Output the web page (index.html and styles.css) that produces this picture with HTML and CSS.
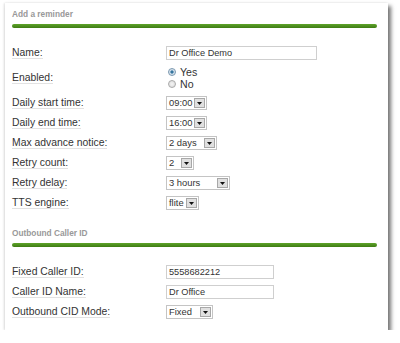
FILE: index.html
```html
<!DOCTYPE html>
<html>
<head>
  <meta charset="utf-8">
  <title>Add a reminder</title>
  <link rel="stylesheet" href="styles.css">
</head>
<body>
  <div class="card">
    <div class="section-head">
      <h2>Add a reminder</h2>
      <div class="bar"></div>
    </div>

    <div class="form">
      <label class="label">Name:</label>
      <input class="text wide" type="text" value="Dr Office Demo">

      <label class="label">Enabled:</label>
      <div class="radios">
        <label class="radio"><input type="radio" name="enabled" checked> Yes</label>
        <label class="radio"><input type="radio" name="enabled"> No</label>
      </div>

      <label class="label">Daily start time:</label>
      <div class="select w41"><span class="val">09:00</span><span class="btn"><svg width="5" height="3" viewBox="0 0 5 3"><path d="M0 0h5L2.5 3z"/></svg></span></div>

      <label class="label">Daily end time:</label>
      <div class="select w41"><span class="val">16:00</span><span class="btn"><svg width="5" height="3" viewBox="0 0 5 3"><path d="M0 0h5L2.5 3z"/></svg></span></div>

      <label class="label">Max advance notice:</label>
      <div class="select w51"><span class="val">2 days</span><span class="btn"><svg width="5" height="3" viewBox="0 0 5 3"><path d="M0 0h5L2.5 3z"/></svg></span></div>

      <label class="label">Retry count:</label>
      <div class="select w28"><span class="val">2</span><span class="btn"><svg width="5" height="3" viewBox="0 0 5 3"><path d="M0 0h5L2.5 3z"/></svg></span></div>

      <label class="label">Retry delay:</label>
      <div class="select w64"><span class="val">3 hours</span><span class="btn"><svg width="5" height="3" viewBox="0 0 5 3"><path d="M0 0h5L2.5 3z"/></svg></span></div>

      <label class="label">TTS engine:</label>
      <div class="select w33"><span class="val">flite</span><span class="btn"><svg width="5" height="3" viewBox="0 0 5 3"><path d="M0 0h5L2.5 3z"/></svg></span></div>
    </div>

    <div class="section-head second">
      <h2>Outbound Caller ID</h2>
      <div class="bar"></div>
    </div>

    <div class="form tight">
      <label class="label">Fixed Caller ID:</label>
      <input class="text medium" type="text" value="5558682212">

      <label class="label">Caller ID Name:</label>
      <input class="text medium" type="text" value="Dr Office">

      <label class="label">Outbound CID Mode:</label>
      <div class="select w47"><span class="val">Fixed</span><span class="btn"><svg width="5" height="3" viewBox="0 0 5 3"><path d="M0 0h5L2.5 3z"/></svg></span></div>
    </div>
  </div>
</body>
</html>
```

FILE: styles.css
```css
* {
  margin: 0;
  padding: 0;
  box-sizing: border-box;
}

body {
  background: #fff;
  font-family: 'Liberation Sans', Arial, sans-serif;
  color: #333;
}

.card {
  margin: 3px 0 0 5px;
  width: 383px;
  height: 327px;
  background: #fff;
  padding: 0 11px 0 7px;
  box-shadow: 3px 3px 4px rgba(0, 0, 0, 0.55), -1px 0 2px rgba(0, 0, 0, 0.12);
}

.section-head {
  padding-top: 6px;
}

.section-head.second {
  padding-top: 18px;
}

h2 {
  font-size: 8.3px;
  font-weight: bold;
  color: #999;
  line-height: 10px;
}

.bar {
  margin-top: 5px;
  height: 4px;
  border-radius: 2px;
  background: linear-gradient(#5ea42a, #3f7c14);
}

.form {
  display: grid;
  grid-template-columns: 154px auto;
  row-gap: 6px;
  align-items: center;
  justify-items: start;
  margin-top: 18px;
}

.form.tight {
  margin-top: 18px;
}

.label {
  font-size: 10.4px;
  line-height: 11px;
  color: #333;
  border-bottom: 1px solid #e2e2e2;
}

.text {
  height: 14px;
  border: 1px solid #cfcfcf;
  padding: 0 2px;
  font-family: 'Liberation Sans', Arial, sans-serif;
  font-size: 9.2px;
  color: #333;
  outline: none;
}

.text.wide {
  width: 151px;
}

.text.medium {
  width: 108px;
}

.radios {
  display: flex;
  flex-direction: column;
}

.radio {
  display: flex;
  align-items: center;
  gap: 4px;
  height: 12px;
  font-size: 10.6px;
  color: #333;
  padding-left: 2px;
}

.radio input {
  appearance: none;
  width: 8px;
  height: 8px;
  border-radius: 50%;
  border: 1px solid #aaa;
  background: radial-gradient(circle, #f4f4f4, #d8d8d8);
  margin: 0;
}

.radio input:checked {
  border-color: #7a98b0;
  background: radial-gradient(circle, #2f6d95 0, #3c7ca6 35%, #cfdde8 40%, #e8eef3 100%);
}

.select {
  display: flex;
  align-items: stretch;
  height: 14px;
  border: 1px solid #c4c4c4;
  background: #fff;
}

.select .val {
  flex: 1;
  font-size: 9.4px;
  line-height: 12px;
  padding-left: 2px;
  color: #333;
}

.select .btn {
  width: 11px;
  margin: 1px;
  background: #e0e0e0;
  border: 1px solid #a8a8a8;
  display: flex;
  align-items: center;
  justify-content: center;
}

.select .btn svg {
  fill: #111;
}

.w28 { width: 28px; }
.w33 { width: 33px; }
.w41 { width: 41px; }
.w47 { width: 47px; }
.w51 { width: 51px; }
.w64 { width: 64px; }
```
